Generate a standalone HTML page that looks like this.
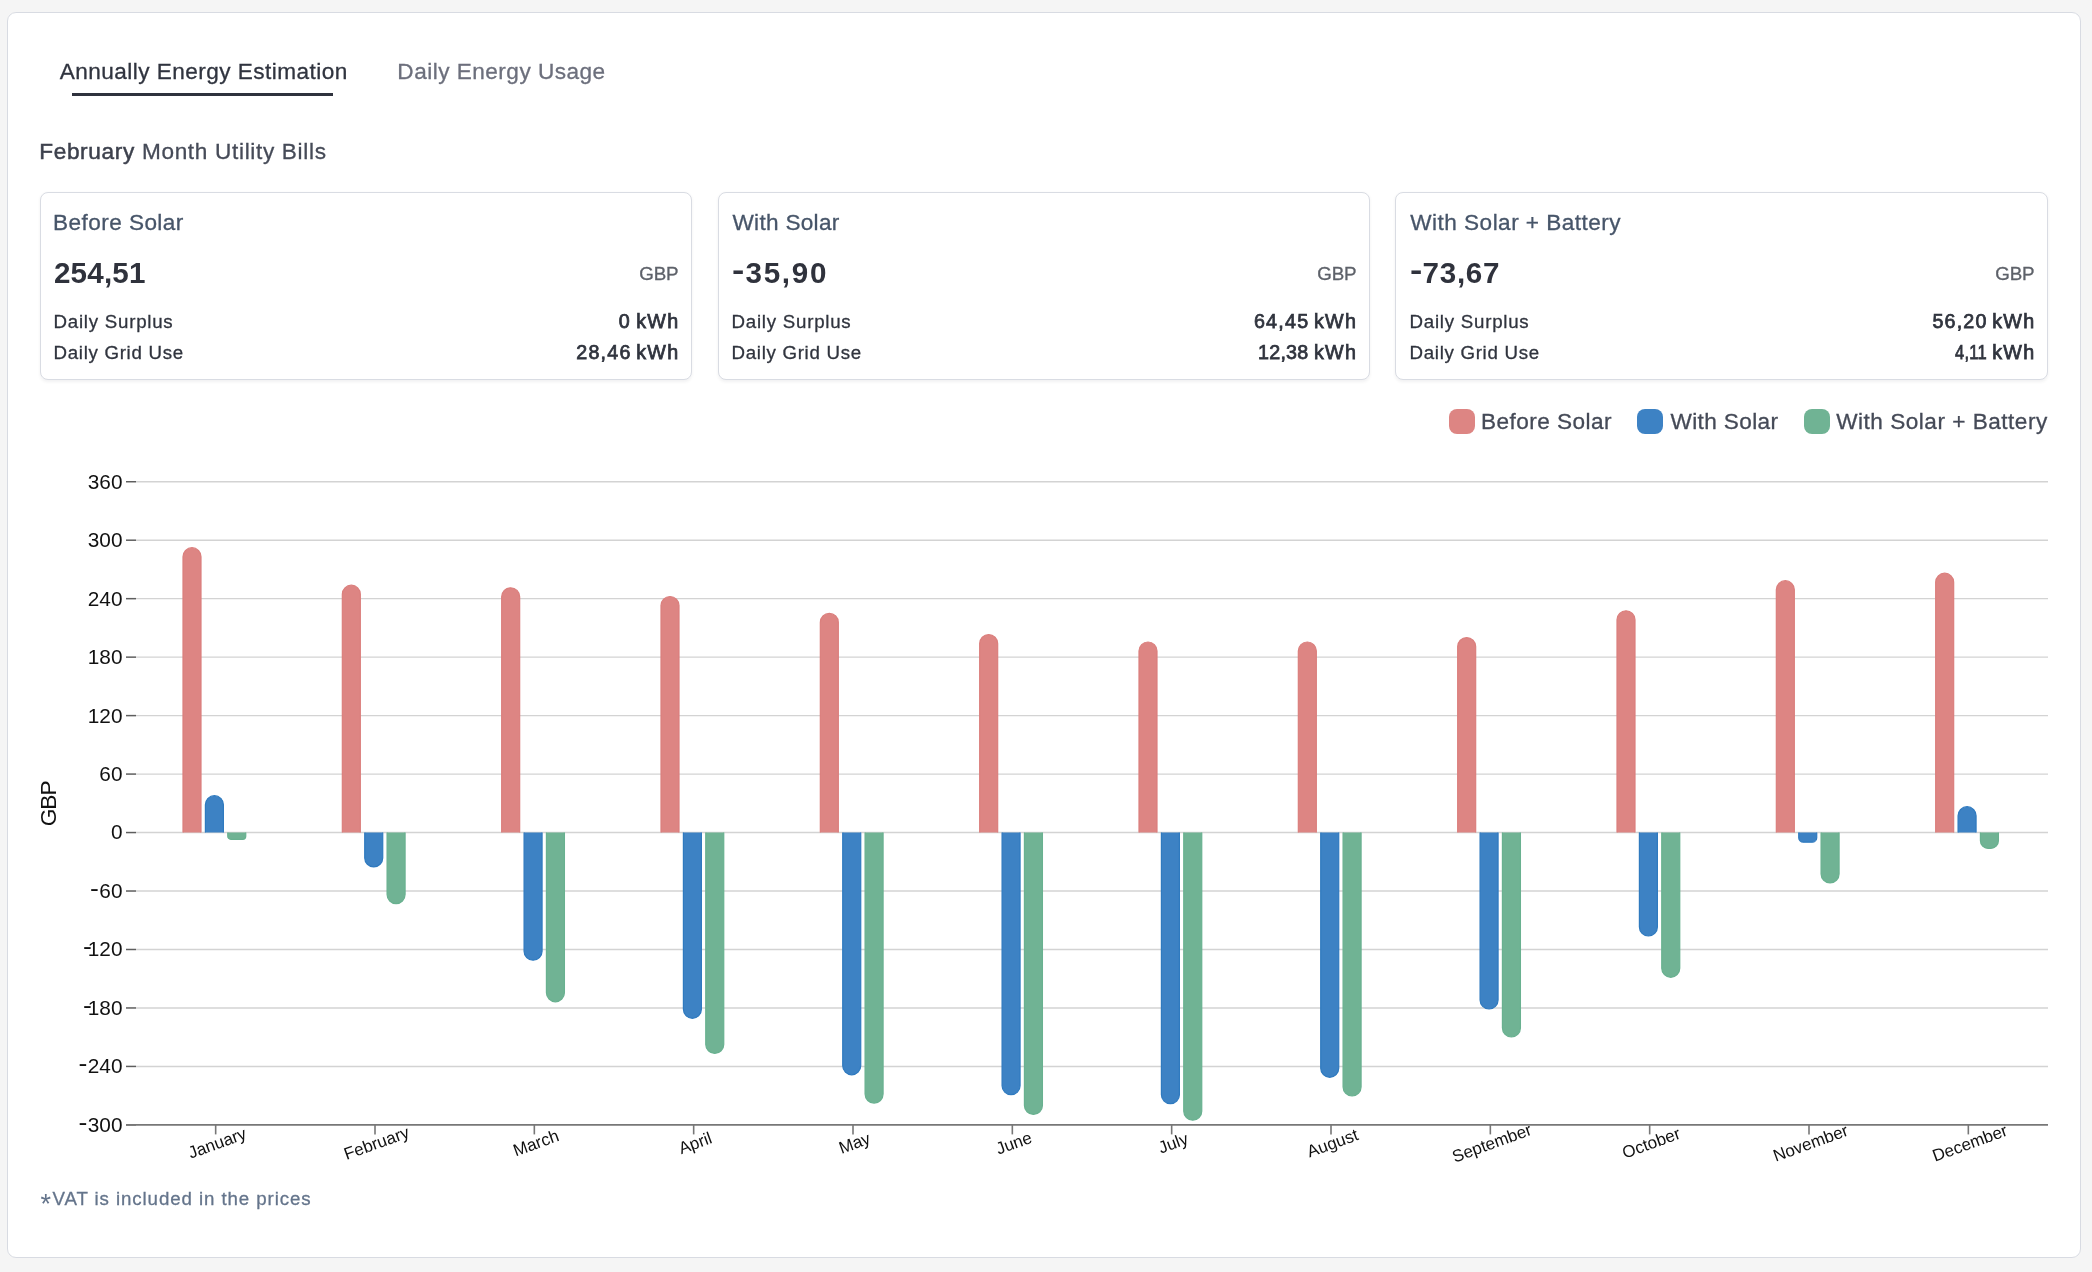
<!DOCTYPE html>
<html lang="en">
<head>
<meta charset="utf-8">
<title>Energy Estimation</title>
<style>
html,body{margin:0;padding:0;}
body{width:2092px;height:1272px;background:#f5f5f5;font-family:"Liberation Sans", sans-serif;overflow:hidden;position:relative;}
#root{position:absolute;left:0;top:0;width:2092px;height:1272px;will-change:transform;}
.t{position:absolute;white-space:nowrap;margin:0;padding:0;}
.panel{position:absolute;left:7px;top:12px;width:2072px;height:1244px;background:#fff;border:1px solid #d8dbe2;border-radius:9px;}
.card{position:absolute;top:192px;width:650px;height:186px;background:#fff;border:1px solid #d9dce3;border-radius:8px;box-shadow:0 1.7px 3.4px rgba(15,20,40,.06);}
.ul{position:absolute;left:72px;top:93px;width:261px;height:3.4px;background:#2f323d;}
.hy{display:inline-block;transform:translateY(-2.6px) scaleX(1.25);transform-origin:0 50%;margin-right:2.2px;}
.ast{font-size:27px;line-height:0;position:relative;top:8.2px;-webkit-text-stroke:0;margin-right:0.5px;}
.sw{position:absolute;top:408.8px;width:26px;height:25.4px;border-radius:8px;}
svg{position:absolute;left:0;top:0;}
svg text{font-family:"Liberation Sans", sans-serif;}
</style>
</head>
<body>
<div id="root">
<div class="panel"></div>

<div class="t tab1" style="left:59.74px;top:57.00px;font-size:22.6px;line-height:29px;color:#30343f;font-weight:400;letter-spacing:0.454px;-webkit-text-stroke:0.3px #30343f;">Annually Energy Estimation</div>
<div class="ul"></div>
<div class="t tab2" style="left:397.34px;top:56.80px;font-size:22.6px;line-height:29px;color:#6c6f7c;font-weight:400;letter-spacing:0.481px;-webkit-text-stroke:0.3px #6c6f7c;">Daily Energy Usage</div>
<div class="t title" style="left:39.18px;top:136.50px;font-size:22.6px;line-height:29px;color:#464b58;font-weight:400;letter-spacing:0.671px;-webkit-text-stroke:0.3px #464b58;"><span style="color:#3d414d;-webkit-text-stroke:0.5px #3d414d">February</span> Month Utility Bills</div>
<div class="card" style="left:40px;width:650px"></div>
<div class="t c0title" style="left:53.12px;top:207.70px;font-size:22.6px;line-height:29px;color:#475569;font-weight:400;letter-spacing:0.419px;-webkit-text-stroke:0.3px #475569;">Before Solar</div>
<div class="t c0val" style="left:53.92px;top:253.80px;font-size:29.6px;line-height:38px;color:#2f323c;font-weight:700;letter-spacing:0.211px;">254,51</div>
<div class="t c0gbp" style="left:639.20px;top:261.50px;font-size:18.8px;line-height:24px;color:#5d6169;font-weight:400;letter-spacing:-0.165px;-webkit-text-stroke:0.3px #5d6169;">GBP</div>
<div class="t c0l1" style="left:53.57px;top:309.90px;font-size:18.7px;line-height:24px;color:#30343e;font-weight:400;letter-spacing:0.751px;-webkit-text-stroke:0.3px #30343e;">Daily Surplus</div>
<div class="t c0v1n" style="left:618.75px;top:307.90px;font-size:19.7px;line-height:26px;color:#30343e;font-weight:400;letter-spacing:2.466px;-webkit-text-stroke:0.75px #30343e;">0</div>
<div class="t c0v1u" style="left:636.14px;top:307.90px;font-size:19.7px;line-height:26px;color:#30343e;font-weight:400;letter-spacing:1.346px;-webkit-text-stroke:0.75px #30343e;">kWh</div>
<div class="t c0v2n" style="left:576.19px;top:339.00px;font-size:19.7px;line-height:26px;color:#30343e;font-weight:400;letter-spacing:1.257px;-webkit-text-stroke:0.75px #30343e;">28,46</div>
<div class="t c0v2u" style="left:636.14px;top:339.00px;font-size:19.7px;line-height:26px;color:#30343e;font-weight:400;letter-spacing:1.346px;-webkit-text-stroke:0.75px #30343e;">kWh</div>
<div class="t c0l2" style="left:53.57px;top:341.00px;font-size:18.7px;line-height:24px;color:#30343e;font-weight:400;letter-spacing:0.696px;-webkit-text-stroke:0.3px #30343e;">Daily Grid Use</div>
<div class="card" style="left:718px;width:650px"></div>
<div class="t c1title" style="left:732.46px;top:207.70px;font-size:22.6px;line-height:29px;color:#475569;font-weight:400;letter-spacing:0.295px;-webkit-text-stroke:0.3px #475569;">With Solar</div>
<div class="t c1val" style="left:731.74px;top:253.80px;font-size:29.6px;line-height:38px;color:#2f323c;font-weight:700;letter-spacing:1.714px;"><span class="hy">-</span>35,90</div>
<div class="t c1gbp" style="left:1317.20px;top:261.50px;font-size:18.8px;line-height:24px;color:#5d6169;font-weight:400;letter-spacing:-0.165px;-webkit-text-stroke:0.3px #5d6169;">GBP</div>
<div class="t c1l1" style="left:731.57px;top:309.90px;font-size:18.7px;line-height:24px;color:#30343e;font-weight:400;letter-spacing:0.751px;-webkit-text-stroke:0.3px #30343e;">Daily Surplus</div>
<div class="t c1v1n" style="left:1253.90px;top:307.90px;font-size:19.7px;line-height:26px;color:#30343e;font-weight:400;letter-spacing:1.282px;-webkit-text-stroke:0.75px #30343e;">64,45</div>
<div class="t c1v1u" style="left:1314.02px;top:307.90px;font-size:19.7px;line-height:26px;color:#30343e;font-weight:400;letter-spacing:1.261px;-webkit-text-stroke:0.75px #30343e;">kWh</div>
<div class="t c1v2n" style="left:1258.05px;top:339.00px;font-size:19.7px;line-height:26px;color:#30343e;font-weight:400;letter-spacing:0.236px;-webkit-text-stroke:0.75px #30343e;">12,38</div>
<div class="t c1v2u" style="left:1314.02px;top:339.00px;font-size:19.7px;line-height:26px;color:#30343e;font-weight:400;letter-spacing:1.261px;-webkit-text-stroke:0.75px #30343e;">kWh</div>
<div class="t c1l2" style="left:731.57px;top:341.00px;font-size:18.7px;line-height:24px;color:#30343e;font-weight:400;letter-spacing:0.696px;-webkit-text-stroke:0.3px #30343e;">Daily Grid Use</div>
<div class="card" style="left:1395px;width:651px"></div>
<div class="t c2title" style="left:1410.34px;top:207.70px;font-size:22.6px;line-height:29px;color:#475569;font-weight:400;letter-spacing:0.457px;-webkit-text-stroke:0.3px #475569;">With Solar + Battery</div>
<div class="t c2val" style="left:1409.74px;top:253.80px;font-size:29.6px;line-height:38px;color:#2f323c;font-weight:700;letter-spacing:0.734px;"><span class="hy">-</span>73,67</div>
<div class="t c2gbp" style="left:1995.20px;top:261.50px;font-size:18.8px;line-height:24px;color:#5d6169;font-weight:400;letter-spacing:-0.165px;-webkit-text-stroke:0.3px #5d6169;">GBP</div>
<div class="t c2l1" style="left:1409.57px;top:309.90px;font-size:18.7px;line-height:24px;color:#30343e;font-weight:400;letter-spacing:0.751px;-webkit-text-stroke:0.3px #30343e;">Daily Surplus</div>
<div class="t c2v1n" style="left:1932.53px;top:307.90px;font-size:19.7px;line-height:26px;color:#30343e;font-weight:400;letter-spacing:1.136px;-webkit-text-stroke:0.75px #30343e;">56,20</div>
<div class="t c2v1u" style="left:1992.14px;top:307.90px;font-size:19.7px;line-height:26px;color:#30343e;font-weight:400;letter-spacing:1.346px;-webkit-text-stroke:0.75px #30343e;">kWh</div>
<div class="t c2v2n" style="left:1954.94px;top:339.00px;font-size:19.7px;line-height:26px;color:#30343e;font-weight:400;letter-spacing:0.326px;-webkit-text-stroke:0.75px #30343e;transform:scaleX(.84);transform-origin:0 0;">4,11</div>
<div class="t c2v2u" style="left:1992.14px;top:339.00px;font-size:19.7px;line-height:26px;color:#30343e;font-weight:400;letter-spacing:1.346px;-webkit-text-stroke:0.75px #30343e;">kWh</div>
<div class="t c2l2" style="left:1409.57px;top:341.00px;font-size:18.7px;line-height:24px;color:#30343e;font-weight:400;letter-spacing:0.696px;-webkit-text-stroke:0.3px #30343e;">Daily Grid Use</div>
<div class="sw" style="left:1449px;background:#dd8583"></div>
<div class="t lg0" style="left:1481.03px;top:406.70px;font-size:22.6px;line-height:29px;color:#454a57;font-weight:400;letter-spacing:0.449px;-webkit-text-stroke:0.3px #454a57;">Before Solar</div>
<div class="sw" style="left:1637px;background:#3d82c4"></div>
<div class="t lg1" style="left:1670.50px;top:406.70px;font-size:22.6px;line-height:29px;color:#454a57;font-weight:400;letter-spacing:0.369px;-webkit-text-stroke:0.3px #454a57;">With Solar</div>
<div class="sw" style="left:1803.5px;background:#70b394"></div>
<div class="t lg2" style="left:1836.16px;top:406.70px;font-size:22.6px;line-height:29px;color:#454a57;font-weight:400;letter-spacing:0.504px;-webkit-text-stroke:0.3px #454a57;">With Solar + Battery</div>
<div class="t foot" style="left:40.50px;top:1186.90px;font-size:18.7px;line-height:24px;color:#64748b;font-weight:400;letter-spacing:0.911px;-webkit-text-stroke:0.3px #64748b;"><span class="ast">*</span>VAT is included in the prices</div>
<svg width="2092" height="1272" viewBox="0 0 2092 1272">
<line x1="136.0" x2="2048.0" y1="1066.43" y2="1066.43" stroke="#d3d3d3" stroke-width="1.4"/>
<line x1="136.0" x2="2048.0" y1="1007.96" y2="1007.96" stroke="#d3d3d3" stroke-width="1.4"/>
<line x1="136.0" x2="2048.0" y1="949.49" y2="949.49" stroke="#d3d3d3" stroke-width="1.4"/>
<line x1="136.0" x2="2048.0" y1="891.02" y2="891.02" stroke="#d3d3d3" stroke-width="1.4"/>
<line x1="136.0" x2="2048.0" y1="832.55" y2="832.55" stroke="#d3d3d3" stroke-width="1.4"/>
<line x1="136.0" x2="2048.0" y1="774.08" y2="774.08" stroke="#d3d3d3" stroke-width="1.4"/>
<line x1="136.0" x2="2048.0" y1="715.61" y2="715.61" stroke="#d3d3d3" stroke-width="1.4"/>
<line x1="136.0" x2="2048.0" y1="657.14" y2="657.14" stroke="#d3d3d3" stroke-width="1.4"/>
<line x1="136.0" x2="2048.0" y1="598.67" y2="598.67" stroke="#d3d3d3" stroke-width="1.4"/>
<line x1="136.0" x2="2048.0" y1="540.20" y2="540.20" stroke="#d3d3d3" stroke-width="1.4"/>
<line x1="136.0" x2="2048.0" y1="481.73" y2="481.73" stroke="#d3d3d3" stroke-width="1.4"/>
<path d="M183.00,832.55 L183.00,556.70 A9.00,9.00 0 0 1 192.00,547.70 L192.00,547.70 A9.00,9.00 0 0 1 201.00,556.70 L201.00,832.55" fill="#dd8583" stroke="#db7f7d" stroke-width="1.2"/>
<path d="M205.40,832.55 L205.40,804.70 A9.00,9.00 0 0 1 214.40,795.70 L214.40,795.70 A9.00,9.00 0 0 1 223.40,804.70 L223.40,832.55" fill="#3d82c4" stroke="#2f7abf" stroke-width="1.2"/>
<path d="M227.75,832.55 L227.75,836.22 A3.08,3.08 0 0 0 230.83,839.30 L242.67,839.30 A3.08,3.08 0 0 0 245.75,836.22 L245.75,832.55" fill="#70b394" stroke="#69b190" stroke-width="1.2"/>
<path d="M342.33,832.55 L342.33,594.20 A9.00,9.00 0 0 1 351.33,585.20 L351.33,585.20 A9.00,9.00 0 0 1 360.33,594.20 L360.33,832.55" fill="#dd8583" stroke="#db7f7d" stroke-width="1.2"/>
<path d="M364.73,832.55 L364.73,857.90 A9.00,9.00 0 0 0 373.73,866.90 L373.73,866.90 A9.00,9.00 0 0 0 382.73,857.90 L382.73,832.55" fill="#3d82c4" stroke="#2f7abf" stroke-width="1.2"/>
<path d="M387.08,832.55 L387.08,894.60 A9.00,9.00 0 0 0 396.08,903.60 L396.08,903.60 A9.00,9.00 0 0 0 405.08,894.60 L405.08,832.55" fill="#70b394" stroke="#69b190" stroke-width="1.2"/>
<path d="M501.67,832.55 L501.67,596.80 A9.00,9.00 0 0 1 510.67,587.80 L510.67,587.80 A9.00,9.00 0 0 1 519.67,596.80 L519.67,832.55" fill="#dd8583" stroke="#db7f7d" stroke-width="1.2"/>
<path d="M524.07,832.55 L524.07,951.20 A9.00,9.00 0 0 0 533.07,960.20 L533.07,960.20 A9.00,9.00 0 0 0 542.07,951.20 L542.07,832.55" fill="#3d82c4" stroke="#2f7abf" stroke-width="1.2"/>
<path d="M546.42,832.55 L546.42,992.80 A9.00,9.00 0 0 0 555.42,1001.80 L555.42,1001.80 A9.00,9.00 0 0 0 564.42,992.80 L564.42,832.55" fill="#70b394" stroke="#69b190" stroke-width="1.2"/>
<path d="M661.00,832.55 L661.00,605.50 A9.00,9.00 0 0 1 670.00,596.50 L670.00,596.50 A9.00,9.00 0 0 1 679.00,605.50 L679.00,832.55" fill="#dd8583" stroke="#db7f7d" stroke-width="1.2"/>
<path d="M683.40,832.55 L683.40,1009.30 A9.00,9.00 0 0 0 692.40,1018.30 L692.40,1018.30 A9.00,9.00 0 0 0 701.40,1009.30 L701.40,832.55" fill="#3d82c4" stroke="#2f7abf" stroke-width="1.2"/>
<path d="M705.75,832.55 L705.75,1044.40 A9.00,9.00 0 0 0 714.75,1053.40 L714.75,1053.40 A9.00,9.00 0 0 0 723.75,1044.40 L723.75,832.55" fill="#70b394" stroke="#69b190" stroke-width="1.2"/>
<path d="M820.33,832.55 L820.33,622.40 A9.00,9.00 0 0 1 829.33,613.40 L829.33,613.40 A9.00,9.00 0 0 1 838.33,622.40 L838.33,832.55" fill="#dd8583" stroke="#db7f7d" stroke-width="1.2"/>
<path d="M842.73,832.55 L842.73,1065.80 A9.00,9.00 0 0 0 851.73,1074.80 L851.73,1074.80 A9.00,9.00 0 0 0 860.73,1065.80 L860.73,832.55" fill="#3d82c4" stroke="#2f7abf" stroke-width="1.2"/>
<path d="M865.08,832.55 L865.08,1094.10 A9.00,9.00 0 0 0 874.08,1103.10 L874.08,1103.10 A9.00,9.00 0 0 0 883.08,1094.10 L883.08,832.55" fill="#70b394" stroke="#69b190" stroke-width="1.2"/>
<path d="M979.67,832.55 L979.67,643.60 A9.00,9.00 0 0 1 988.67,634.60 L988.67,634.60 A9.00,9.00 0 0 1 997.67,643.60 L997.67,832.55" fill="#dd8583" stroke="#db7f7d" stroke-width="1.2"/>
<path d="M1002.07,832.55 L1002.07,1085.70 A9.00,9.00 0 0 0 1011.07,1094.70 L1011.07,1094.70 A9.00,9.00 0 0 0 1020.07,1085.70 L1020.07,832.55" fill="#3d82c4" stroke="#2f7abf" stroke-width="1.2"/>
<path d="M1024.42,832.55 L1024.42,1105.40 A9.00,9.00 0 0 0 1033.42,1114.40 L1033.42,1114.40 A9.00,9.00 0 0 0 1042.42,1105.40 L1042.42,832.55" fill="#70b394" stroke="#69b190" stroke-width="1.2"/>
<path d="M1139.00,832.55 L1139.00,651.00 A9.00,9.00 0 0 1 1148.00,642.00 L1148.00,642.00 A9.00,9.00 0 0 1 1157.00,651.00 L1157.00,832.55" fill="#dd8583" stroke="#db7f7d" stroke-width="1.2"/>
<path d="M1161.40,832.55 L1161.40,1094.70 A9.00,9.00 0 0 0 1170.40,1103.70 L1170.40,1103.70 A9.00,9.00 0 0 0 1179.40,1094.70 L1179.40,832.55" fill="#3d82c4" stroke="#2f7abf" stroke-width="1.2"/>
<path d="M1183.75,832.55 L1183.75,1111.20 A9.00,9.00 0 0 0 1192.75,1120.20 L1192.75,1120.20 A9.00,9.00 0 0 0 1201.75,1111.20 L1201.75,832.55" fill="#70b394" stroke="#69b190" stroke-width="1.2"/>
<path d="M1298.33,832.55 L1298.33,651.00 A9.00,9.00 0 0 1 1307.33,642.00 L1307.33,642.00 A9.00,9.00 0 0 1 1316.33,651.00 L1316.33,832.55" fill="#dd8583" stroke="#db7f7d" stroke-width="1.2"/>
<path d="M1320.73,832.55 L1320.73,1068.30 A9.00,9.00 0 0 0 1329.73,1077.30 L1329.73,1077.30 A9.00,9.00 0 0 0 1338.73,1068.30 L1338.73,832.55" fill="#3d82c4" stroke="#2f7abf" stroke-width="1.2"/>
<path d="M1343.08,832.55 L1343.08,1087.00 A9.00,9.00 0 0 0 1352.08,1096.00 L1352.08,1096.00 A9.00,9.00 0 0 0 1361.08,1087.00 L1361.08,832.55" fill="#70b394" stroke="#69b190" stroke-width="1.2"/>
<path d="M1457.67,832.55 L1457.67,646.60 A9.00,9.00 0 0 1 1466.67,637.60 L1466.67,637.60 A9.00,9.00 0 0 1 1475.67,646.60 L1475.67,832.55" fill="#dd8583" stroke="#db7f7d" stroke-width="1.2"/>
<path d="M1480.07,832.55 L1480.07,1000.00 A9.00,9.00 0 0 0 1489.07,1009.00 L1489.07,1009.00 A9.00,9.00 0 0 0 1498.07,1000.00 L1498.07,832.55" fill="#3d82c4" stroke="#2f7abf" stroke-width="1.2"/>
<path d="M1502.42,832.55 L1502.42,1028.00 A9.00,9.00 0 0 0 1511.42,1037.00 L1511.42,1037.00 A9.00,9.00 0 0 0 1520.42,1028.00 L1520.42,832.55" fill="#70b394" stroke="#69b190" stroke-width="1.2"/>
<path d="M1617.00,832.55 L1617.00,619.80 A9.00,9.00 0 0 1 1626.00,610.80 L1626.00,610.80 A9.00,9.00 0 0 1 1635.00,619.80 L1635.00,832.55" fill="#dd8583" stroke="#db7f7d" stroke-width="1.2"/>
<path d="M1639.40,832.55 L1639.40,927.00 A9.00,9.00 0 0 0 1648.40,936.00 L1648.40,936.00 A9.00,9.00 0 0 0 1657.40,927.00 L1657.40,832.55" fill="#3d82c4" stroke="#2f7abf" stroke-width="1.2"/>
<path d="M1661.75,832.55 L1661.75,968.30 A9.00,9.00 0 0 0 1670.75,977.30 L1670.75,977.30 A9.00,9.00 0 0 0 1679.75,968.30 L1679.75,832.55" fill="#70b394" stroke="#69b190" stroke-width="1.2"/>
<path d="M1776.33,832.55 L1776.33,589.70 A9.00,9.00 0 0 1 1785.33,580.70 L1785.33,580.70 A9.00,9.00 0 0 1 1794.33,589.70 L1794.33,832.55" fill="#dd8583" stroke="#db7f7d" stroke-width="1.2"/>
<path d="M1798.73,832.55 L1798.73,837.67 A4.53,4.53 0 0 0 1803.26,842.20 L1812.21,842.20 A4.53,4.53 0 0 0 1816.73,837.67 L1816.73,832.55" fill="#3d82c4" stroke="#2f7abf" stroke-width="1.2"/>
<path d="M1821.08,832.55 L1821.08,873.90 A9.00,9.00 0 0 0 1830.08,882.90 L1830.08,882.90 A9.00,9.00 0 0 0 1839.08,873.90 L1839.08,832.55" fill="#70b394" stroke="#69b190" stroke-width="1.2"/>
<path d="M1935.67,832.55 L1935.67,582.20 A9.00,9.00 0 0 1 1944.67,573.20 L1944.67,573.20 A9.00,9.00 0 0 1 1953.67,582.20 L1953.67,832.55" fill="#dd8583" stroke="#db7f7d" stroke-width="1.2"/>
<path d="M1958.07,832.55 L1958.07,815.70 A9.00,9.00 0 0 1 1967.07,806.70 L1967.07,806.70 A9.00,9.00 0 0 1 1976.07,815.70 L1976.07,832.55" fill="#3d82c4" stroke="#2f7abf" stroke-width="1.2"/>
<path d="M1980.42,832.55 L1980.42,840.77 A7.63,7.63 0 0 0 1988.04,848.40 L1990.79,848.40 A7.63,7.63 0 0 0 1998.42,840.77 L1998.42,832.55" fill="#70b394" stroke="#69b190" stroke-width="1.2"/>
<line x1="126" x2="136" y1="1124.90" y2="1124.90" stroke="#5e5e5e" stroke-width="1.5"/>
<text transform="translate(122.5,1131.95) scale(1.02,1)" font-size="20.4" text-anchor="end" fill="#111">300</text>
<text transform="translate(87.34,1130.45) scale(1.3,1.15)" font-size="20.4" text-anchor="end" fill="#111">-</text>
<line x1="126" x2="136" y1="1066.43" y2="1066.43" stroke="#5e5e5e" stroke-width="1.5"/>
<text transform="translate(122.5,1072.95) scale(1.02,1)" font-size="20.4" text-anchor="end" fill="#111">240</text>
<text transform="translate(87.34,1071.45) scale(1.3,1.15)" font-size="20.4" text-anchor="end" fill="#111">-</text>
<line x1="126" x2="136" y1="1007.96" y2="1007.96" stroke="#5e5e5e" stroke-width="1.5"/>
<text transform="translate(122.5,1014.95) scale(1.02,1)" font-size="20.4" text-anchor="end" fill="#111">180</text>
<text transform="translate(91.84,1013.45) scale(1.3,1.15)" font-size="20.4" text-anchor="end" fill="#111">-</text>
<line x1="126" x2="136" y1="949.49" y2="949.49" stroke="#5e5e5e" stroke-width="1.5"/>
<text transform="translate(122.5,955.95) scale(1.02,1)" font-size="20.4" text-anchor="end" fill="#111">120</text>
<text transform="translate(91.84,954.45) scale(1.3,1.15)" font-size="20.4" text-anchor="end" fill="#111">-</text>
<line x1="126" x2="136" y1="891.02" y2="891.02" stroke="#5e5e5e" stroke-width="1.5"/>
<text transform="translate(122.5,897.95) scale(1.02,1)" font-size="20.4" text-anchor="end" fill="#111">60</text>
<text transform="translate(98.91,896.45) scale(1.3,1.15)" font-size="20.4" text-anchor="end" fill="#111">-</text>
<line x1="126" x2="136" y1="832.55" y2="832.55" stroke="#5e5e5e" stroke-width="1.5"/>
<text transform="translate(122.5,838.95) scale(1.02,1)" font-size="20.4" text-anchor="end" fill="#111">0</text>
<line x1="126" x2="136" y1="774.08" y2="774.08" stroke="#5e5e5e" stroke-width="1.5"/>
<text transform="translate(122.5,780.95) scale(1.02,1)" font-size="20.4" text-anchor="end" fill="#111">60</text>
<line x1="126" x2="136" y1="715.61" y2="715.61" stroke="#5e5e5e" stroke-width="1.5"/>
<text transform="translate(122.5,722.95) scale(1.02,1)" font-size="20.4" text-anchor="end" fill="#111">120</text>
<line x1="126" x2="136" y1="657.14" y2="657.14" stroke="#5e5e5e" stroke-width="1.5"/>
<text transform="translate(122.5,663.95) scale(1.02,1)" font-size="20.4" text-anchor="end" fill="#111">180</text>
<line x1="126" x2="136" y1="598.67" y2="598.67" stroke="#5e5e5e" stroke-width="1.5"/>
<text transform="translate(122.5,605.95) scale(1.02,1)" font-size="20.4" text-anchor="end" fill="#111">240</text>
<line x1="126" x2="136" y1="540.20" y2="540.20" stroke="#5e5e5e" stroke-width="1.5"/>
<text transform="translate(122.5,546.95) scale(1.02,1)" font-size="20.4" text-anchor="end" fill="#111">300</text>
<line x1="126" x2="136" y1="481.73" y2="481.73" stroke="#5e5e5e" stroke-width="1.5"/>
<text transform="translate(122.5,488.95) scale(1.02,1)" font-size="20.4" text-anchor="end" fill="#111">360</text>
<line x1="126" x2="2048.0" y1="1124.90" y2="1124.90" stroke="#777" stroke-width="1.8"/>
<line x1="215.67" x2="215.67" y1="1124.90" y2="1134.40" stroke="#777" stroke-width="1.6"/>
<text transform="translate(217.17,1143) rotate(-20)" font-size="17" text-anchor="middle" dy="5.8" fill="#111">January</text>
<line x1="375.00" x2="375.00" y1="1124.90" y2="1134.40" stroke="#777" stroke-width="1.6"/>
<text transform="translate(376.50,1143) rotate(-20)" font-size="17" text-anchor="middle" dy="5.8" fill="#111">February</text>
<line x1="534.33" x2="534.33" y1="1124.90" y2="1134.40" stroke="#777" stroke-width="1.6"/>
<text transform="translate(535.83,1143) rotate(-20)" font-size="17" text-anchor="middle" dy="5.8" fill="#111">March</text>
<line x1="693.67" x2="693.67" y1="1124.90" y2="1134.40" stroke="#777" stroke-width="1.6"/>
<text transform="translate(695.17,1143) rotate(-20)" font-size="17" text-anchor="middle" dy="5.8" fill="#111">April</text>
<line x1="853.00" x2="853.00" y1="1124.90" y2="1134.40" stroke="#777" stroke-width="1.6"/>
<text transform="translate(854.50,1143) rotate(-20)" font-size="17" text-anchor="middle" dy="5.8" fill="#111">May</text>
<line x1="1012.33" x2="1012.33" y1="1124.90" y2="1134.40" stroke="#777" stroke-width="1.6"/>
<text transform="translate(1013.83,1143) rotate(-20)" font-size="17" text-anchor="middle" dy="5.8" fill="#111">June</text>
<line x1="1171.67" x2="1171.67" y1="1124.90" y2="1134.40" stroke="#777" stroke-width="1.6"/>
<text transform="translate(1173.17,1143) rotate(-20)" font-size="17" text-anchor="middle" dy="5.8" fill="#111">July</text>
<line x1="1331.00" x2="1331.00" y1="1124.90" y2="1134.40" stroke="#777" stroke-width="1.6"/>
<text transform="translate(1332.50,1143) rotate(-20)" font-size="17" text-anchor="middle" dy="5.8" fill="#111">August</text>
<line x1="1490.33" x2="1490.33" y1="1124.90" y2="1134.40" stroke="#777" stroke-width="1.6"/>
<text transform="translate(1491.83,1143) rotate(-20)" font-size="17" text-anchor="middle" dy="5.8" fill="#111">September</text>
<line x1="1649.67" x2="1649.67" y1="1124.90" y2="1134.40" stroke="#777" stroke-width="1.6"/>
<text transform="translate(1651.17,1143) rotate(-20)" font-size="17" text-anchor="middle" dy="5.8" fill="#111">October</text>
<line x1="1809.00" x2="1809.00" y1="1124.90" y2="1134.40" stroke="#777" stroke-width="1.6"/>
<text transform="translate(1810.50,1143) rotate(-20)" font-size="17" text-anchor="middle" dy="5.8" fill="#111">November</text>
<line x1="1968.33" x2="1968.33" y1="1124.90" y2="1134.40" stroke="#777" stroke-width="1.6"/>
<text transform="translate(1969.83,1143) rotate(-20)" font-size="17" text-anchor="middle" dy="5.8" fill="#111">December</text>
<text transform="translate(56.3,803.9) rotate(-90)" font-size="22.8" letter-spacing="-1.1" text-anchor="middle" fill="#111">GBP</text>
</svg>
</div>
</body>
</html>
